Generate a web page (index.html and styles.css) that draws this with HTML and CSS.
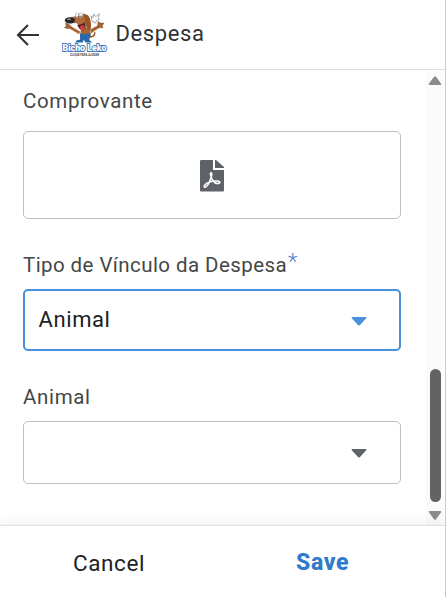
FILE: index.html
```html
<!DOCTYPE html>
<html lang="pt">
<head>
<meta charset="utf-8">
<title>Despesa</title>
<link rel="stylesheet" href="styles.css">
</head>
<body>
<div class="app">
  <header class="header">
    <svg class="back" viewBox="0 0 24 24" width="24" height="24"><path d="M23 12H2M12 2L2 12l10 10" fill="none" stroke="#303236" stroke-width="2.1"/></svg>
    <svg class="logo" viewBox="0 0 48 48" width="48" height="48">
      <g transform="translate(1.500 2) scale(.92)">
        <path d="M29 26q5 0 5-5" fill="none" stroke="#8d5028" stroke-width="1.6"/>
        <path d="M18 20L8 14.500 7 17l10 6zM29 18l9-5 1 3-9 6z" fill="#a96532"/>
        <path d="M19 16q7-2 10 3l1 7H18z" fill="#a96532"/>
        <path d="M7 13l-5-2 1 3-2 2 4 1 4-1zM37 12l1-3 2 2 4 0-2 3 1 2-5 0z" fill="#a96532" stroke="#5b3520" stroke-width=".4"/>
        <path d="M12 4q4-3 8-2 4-3 6 3v8l-3 5-5-2-3-5-9-1q-2-5 6-6z" fill="#b06b36" stroke="#6d4024" stroke-width=".4"/>
        <path d="M22 2q5-2 7 5 2 7 0 12-4-1-5-8z" fill="#985628"/>
        <path d="M15 13q5 0 8-3 1 6-2 9-4-1-6-6z" fill="#512024"/>
        <path d="M18 14l4-1v6l-3 0z" fill="#e43b43"/>
        <path d="M18 22l3 1 7-1 1-1v5l-1 3 3 3h-7l-2-3-1 3h-8q0-3 5-3z" fill="#2868ad"/>
        <ellipse cx="7" cy="8" rx="5.500" ry="3.500" fill="#29282a"/>
        <ellipse cx="6" cy="6.700" rx="2" ry=".8" fill="#aaa"/>
        <ellipse cx="15" cy="2.500" rx="2" ry="2.600" fill="#fff" stroke="#777" stroke-width=".5"/>
        <ellipse cx="19" cy="2.500" rx="2" ry="2.600" fill="#fff" stroke="#777" stroke-width=".5"/>
        <circle cx="16" cy="3.500" r=".7"/><circle cx="19" cy="3.500" r=".7"/>
        <path d="M31 9l-1-6 2 2 1-4 2 3 4-3-1 4 1 2-3 1-1 3-2-1z" fill="#fff" stroke="#888" stroke-width=".8"/>
      </g>
      <text class="brand" x="0.500" y="40" textLength="44" lengthAdjust="spacingAndGlyphs">Bicho Leko</text>
      <text class="tag" x="8" y="45" textLength="29" lengthAdjust="spacingAndGlyphs">CLIQUE PARA AJUDAR</text>
    </svg>
    <h1 class="title">Despesa</h1>
  </header>
  <div class="body">
    <main class="form">
      <div class="label proof">Comprovante</div>
      <div class="field upload">
        <svg viewBox="0 0 24 32" width="24" height="32"><path d="M1.5 0H13v10h11v20.500q0 1-1 1H1q-1 0-1-1V1q0-1 1.500-1zM15 0h1l8 7v1h-9z" fill="#5f6368"/><path d="M11.500 13c-2-1-1 3 1 7 2 3 5 4 7 3 2-2-5-3-10-1-5 2-6 5-5 5 2 1 5-4 6-8 1-3 2-5 1-6z" fill="none" stroke="#fff" stroke-width="1.500"/></svg>
      </div>
      <div class="label link">Tipo de Vínculo da Despesa<span class="required">*</span></div>
      <div class="field select active"><span>Animal</span><svg class="caret" viewBox="0 0 16 9" width="16" height="9"><path d="M1 0h14q1 .5 0 1.500L9 8q-1 1-2 0L1 1.500Q0 .5 1 0z"/></svg></div>
      <div class="label animal">Animal</div>
      <div class="field select plain"><span></span><svg class="caret" viewBox="0 0 16 9" width="16" height="9"><path d="M1 0h14q1 .5 0 1.500L9 8q-1 1-2 0L1 1.500Q0 .5 1 0z"/></svg></div>
    </main>
    <div class="scrollbar">
      <svg viewBox="0 0 14 10" width="14" height="10"><path d="M6 .8q1-1 2 0l5 6.700q1 1.500-1 1.500H2Q0 9 1 7.500z"/></svg>
      <div class="thumb"></div>
      <svg viewBox="0 0 14 10" width="14" height="10"><path d="M6 9.200q1 1 2 0l5-6.700Q14 1 12 1H2Q0 1 1 2.500z"/></svg>
    </div>
  </div>
  <footer class="footer"><span class="cancel">Cancel</span><span class="save">Save</span></footer>
</div>
</body>
</html>
```
FILE: styles.css
```css
* { box-sizing: border-box; }
body { margin: 0; font-family: Roboto, "Liberation Sans", sans-serif; background: #fff; }
svg { display: block; flex: none; }
.app { width: 446px; height: 597px; display: flex; flex-direction: column; border-right: 1px solid #c9c9c9; overflow: hidden; }
.header { height: 70px; flex: none; display: flex; align-items: center; border-bottom: 1px solid #dadce0; padding-left: 16px; }
.logo { margin-left: 22px; }
.brand { font: 900 9px Roboto, sans-serif; fill: #fff; stroke: #3b78bb; stroke-width: 1.8px; paint-order: stroke; }
.tag { font: 700 3px Roboto, sans-serif; fill: #444; }
.title { margin: 0 0 1px 5.500px; font-size: 22px; line-height: 28px; font-weight: 400; letter-spacing: .6px; color: #303236; }
.body { height: 455px; flex: none; display: flex; }
.form { width: 426px; padding: 18px 25px 0 23px; }
.label { height: 26px; font-size: 20.5px; line-height: 26px; letter-spacing: .65px; color: #444746; white-space: nowrap; }
.required { color: #4a80d0; margin-left: 1px; font-weight: 300; position: relative; top: -3px; font-size: 22px; line-height: 1; }
.field { width: 378px; border: 1px solid #bdc1c6; border-radius: 5px; }
.upload { height: 88px; margin-top: 17px; padding-top: 1px; display: flex; align-items: center; justify-content: center; }
.link { margin-top: 33px; letter-spacing: .42px; }
.select { display: flex; align-items: center; justify-content: space-between; padding: 0 33px 0 15px; font-size: 22px; letter-spacing: .6px; color: #202124; }
.active { height: 62px; margin-top: 11px; border: 2px solid #4a90dc; padding: 0 32px 2px 13.5px; }
.active .caret { fill: #4a90dc; margin-top: 5px; }
.animal { margin-top: 33px; }
.plain { height: 63px; margin-top: 11px; }
.plain .caret { fill: #5f6368; margin-top: 2px; }
.scrollbar { width: 18px; background: #fbfbfb; display: flex; flex-direction: column; align-items: center; padding: 6px 0 5px; fill: #8b8b8b; }
.thumb { width: 11px; height: 133px; border-radius: 6px; background: #636363; margin-top: auto; margin-bottom: 8px; }
.footer { height: 72px; flex: none; display: flex; align-items: center; position: relative; border-top: 1px solid #e0e0e0; box-shadow: 0 -1px 14px rgba(0,0,0,.08); background: #fff; font-size: 22.5px; padding: 2px 0 0 73px; color: #202124; }
.cancel { width: 223px; letter-spacing: .6px; }
.save { color: #2f7bcb; font-size: 23px; font-weight: 800; letter-spacing: .7px; }
```
